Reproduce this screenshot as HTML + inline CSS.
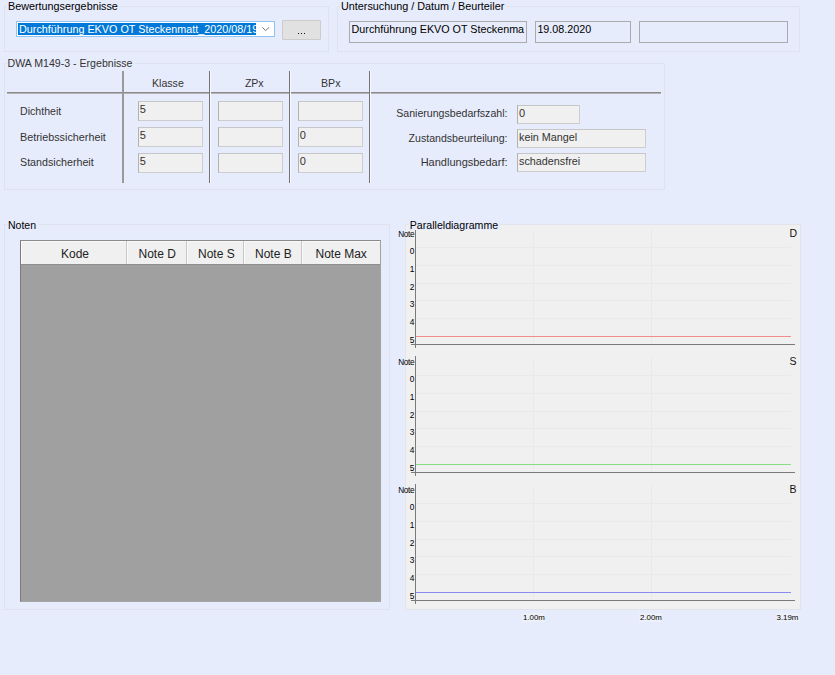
<!DOCTYPE html>
<html><head><meta charset="utf-8">
<style>
html,body{margin:0;padding:0;}
body{width:835px;height:675px;background:#E7ECFC;position:relative;overflow:hidden;font-family:"Liberation Sans",sans-serif;color:#000;}
.a{position:absolute;}
.t{position:absolute;white-space:nowrap;}
.grp{position:absolute;border:1px solid #DEE2EE;box-sizing:border-box;}
.tb{position:absolute;box-sizing:border-box;border:1px solid #ABABAB;overflow:hidden;}
.dis{position:absolute;box-sizing:border-box;border:1px solid;border-color:#C6C6C6 #CDCDCD #CDCDCD #B2B2B2;background:#F0F0F0;overflow:hidden;}
.ln{position:absolute;background:#8C8C8C;}
</style></head><body>

<div class="grp" style="left:4px;top:6px;width:325px;height:46px;"></div>
<div class="a" style="left:7px;top:1px;width:112px;height:10px;background:#E7ECFC;"></div>
<div class="t" style="left:8px;top:0.76px;font-size:10.8px;line-height:11px;color:#000;">Bewertungsergebnisse</div>
<div class="a" style="left:16px;top:21px;width:259px;height:16px;box-sizing:border-box;border:1px solid #8EC3F2;background:#fff;"></div>
<div class="a" style="left:18px;top:23px;width:238px;height:12px;background:#0078D7;overflow:hidden;">
<div class="t" style="left:1px;top:0.76px;font-size:10.8px;line-height:11px;color:#fff;">Durchführung EKVO OT Steckenmatt_2020/08/19</div>
</div>
<svg class="a" style="left:261px;top:26px" width="10" height="6"><polyline points="1.4,1.4 4.7,4.6 8,1.4" fill="none" stroke="#606060" stroke-width="0.85"/></svg>
<div class="a" style="left:282px;top:20px;width:39px;height:20px;box-sizing:border-box;border:1px solid #CCCCCC;background:#E1E1E1;border-radius:1px;"></div>
<div class="a" style="left:298px;top:33px;width:1px;height:1px;background:#111;"></div>
<div class="a" style="left:301px;top:33px;width:1px;height:1px;background:#111;"></div>
<div class="a" style="left:304px;top:33px;width:1px;height:1px;background:#111;"></div>
<div class="grp" style="left:337px;top:6px;width:463px;height:46px;"></div>
<div class="a" style="left:340px;top:1px;width:166px;height:10px;background:#E7ECFC;"></div>
<div class="t" style="left:341px;top:0.76px;font-size:10.8px;line-height:11px;color:#000;">Untersuchung / Datum / Beurteiler</div>
<div class="tb" style="left:349px;top:21px;width:178px;height:22px;"><div class="t" style="left:1.6px;top:1.78px;font-size:10.75px;line-height:11px;color:#000;">Durchführung EKVO OT Steckenma</div></div>
<div class="tb" style="left:535px;top:21px;width:96px;height:22px;"><div class="t" style="left:1.4px;top:1.78px;font-size:10.75px;line-height:11px;color:#000;">19.08.2020</div></div>
<div class="tb" style="left:639px;top:21px;width:149px;height:22px;"></div>
<div class="grp" style="left:4px;top:63px;width:661px;height:127px;"></div>
<div class="a" style="left:7px;top:57px;width:128px;height:10px;background:#E7ECFC;"></div>
<div class="t" style="left:7.5px;top:58.33px;font-size:10.6px;line-height:11px;color:#333;">DWA M149-3 - Ergebnisse</div>
<div class="a" style="left:7px;top:92px;width:654px;height:1px;background:#8A8A8A;"></div>
<div class="a" style="left:7px;top:93px;width:654px;height:1px;background:#B4B4B4;"></div>
<div class="a" style="left:122px;top:71px;width:2px;height:112px;background:#9A9A9A;"></div>
<div class="a" style="left:209px;top:71px;width:1px;height:112px;background:#757575;"></div>
<div class="a" style="left:210px;top:71px;width:1px;height:112px;background:#F6F8FF;"></div>
<div class="a" style="left:289px;top:71px;width:1px;height:112px;background:#757575;"></div>
<div class="a" style="left:290px;top:71px;width:1px;height:112px;background:#F6F8FF;"></div>
<div class="a" style="left:369px;top:71px;width:1px;height:112px;background:#757575;"></div>
<div class="a" style="left:370px;top:71px;width:1px;height:112px;background:#F6F8FF;"></div>
<div class="t" style="left:152px;top:77.83px;font-size:10.6px;line-height:11px;color:#333;">Klasse</div>
<div class="t" style="left:245px;top:77.83px;font-size:10.6px;line-height:11px;color:#333;letter-spacing:-0.1px;">ZPx</div>
<div class="t" style="left:321px;top:77.83px;font-size:10.6px;line-height:11px;color:#333;">BPx</div>
<div class="t" style="left:20px;top:106.33px;font-size:10.6px;line-height:11px;color:#333;">Dichtheit</div>
<div class="t" style="left:20px;top:132.06px;font-size:10.8px;line-height:11px;color:#333;">Betriebssicherheit</div>
<div class="t" style="left:20px;top:157.49px;font-size:10.7px;line-height:11px;color:#333;">Standsicherheit</div>
<div class="dis" style="left:138px;top:101px;width:65px;height:20px;"><div class="t" style="left:0.7px;top:2.49px;font-size:11px;line-height:11px;color:#333;">5</div></div>
<div class="dis" style="left:218px;top:101px;width:65px;height:20px;"></div>
<div class="dis" style="left:298px;top:101px;width:65px;height:20px;"></div>
<div class="dis" style="left:138px;top:127px;width:65px;height:20px;"><div class="t" style="left:0.7px;top:2.49px;font-size:11px;line-height:11px;color:#333;">5</div></div>
<div class="dis" style="left:218px;top:127px;width:65px;height:20px;"></div>
<div class="dis" style="left:298px;top:127px;width:65px;height:20px;"><div class="t" style="left:0.7px;top:2.49px;font-size:11px;line-height:11px;color:#333;">0</div></div>
<div class="dis" style="left:138px;top:153px;width:65px;height:20px;"><div class="t" style="left:0.7px;top:2.49px;font-size:11px;line-height:11px;color:#333;">5</div></div>
<div class="dis" style="left:218px;top:153px;width:65px;height:20px;"></div>
<div class="dis" style="left:298px;top:153px;width:65px;height:20px;"><div class="t" style="left:0.7px;top:2.49px;font-size:11px;line-height:11px;color:#333;">0</div></div>
<div class="t" style="right:327.5px;top:107.93px;font-size:10.6px;line-height:11px;color:#333;">Sanierungsbedarfszahl:</div>
<div class="t" style="right:327.5px;top:133.13px;font-size:10.6px;line-height:11px;color:#333;">Zustandsbeurteilung:</div>
<div class="t" style="right:327.5px;top:157.49px;font-size:11px;line-height:11px;color:#333;">Handlungsbedarf:</div>
<div class="dis" style="left:517px;top:105px;width:63px;height:19px;"><div class="t" style="left:1px;top:1.69px;font-size:11px;line-height:11px;color:#333;">0</div></div>
<div class="dis" style="left:517px;top:129px;width:129px;height:19px;"><div class="t" style="left:1px;top:1.76px;font-size:10.8px;line-height:11px;color:#333;">kein Mangel</div></div>
<div class="dis" style="left:517px;top:153px;width:129px;height:19px;"><div class="t" style="left:1px;top:1.76px;font-size:10.8px;line-height:11px;color:#333;">schadensfrei</div></div>
<div class="grp" style="left:4px;top:224px;width:386px;height:386px;"></div>
<div class="a" style="left:7px;top:219px;width:31px;height:10px;background:#E7ECFC;"></div>
<div class="t" style="left:8px;top:220.06px;font-size:10.5px;line-height:10px;color:#000;">Noten</div>
<div class="a" style="left:20px;top:240px;width:361px;height:362px;box-sizing:border-box;border:1px solid;border-color:#8A8A8A #A2A2A2 #A6A6A6 #7C7C7C;background:#A0A0A0;"></div>
<div class="a" style="left:21px;top:241px;width:359px;height:23px;box-sizing:border-box;background:#F0F0F0;border-top:1px solid #FAFAFA;border-left:1px solid #FAFAFA;"></div>
<div class="a" style="left:21px;top:264px;width:359px;height:1px;background:#8E8E8E;"></div>
<div class="a" style="left:126px;top:241px;width:1px;height:23px;background:#C8C8C8;"></div>
<div class="a" style="left:127px;top:241px;width:1px;height:23px;background:#FAFAFA;"></div>
<div class="a" style="left:186px;top:241px;width:1px;height:23px;background:#C8C8C8;"></div>
<div class="a" style="left:187px;top:241px;width:1px;height:23px;background:#FAFAFA;"></div>
<div class="a" style="left:243px;top:241px;width:1px;height:23px;background:#C8C8C8;"></div>
<div class="a" style="left:244px;top:241px;width:1px;height:23px;background:#FAFAFA;"></div>
<div class="a" style="left:301px;top:241px;width:1px;height:23px;background:#C8C8C8;"></div>
<div class="a" style="left:302px;top:241px;width:1px;height:23px;background:#FAFAFA;"></div>
<div class="t" style="left:61px;top:248.14px;font-size:12px;line-height:12px;color:#222;">Kode</div>
<div class="t" style="left:138.5px;top:248.14px;font-size:12px;line-height:12px;color:#222;">Note D</div>
<div class="t" style="left:198px;top:248.14px;font-size:12px;line-height:12px;color:#222;">Note S</div>
<div class="t" style="left:255px;top:248.14px;font-size:12px;line-height:12px;color:#222;">Note B</div>
<div class="t" style="left:315.5px;top:248.14px;font-size:12px;line-height:12px;color:#222;">Note Max</div>
<div class="a" style="left:405px;top:224px;width:396px;height:386px;background:#F0F0F0;box-sizing:border-box;border:1px solid #E2E4EC;"></div>
<svg class="a" style="left:0;top:0" width="835" height="675" shape-rendering="crispEdges">
<rect x="416" y="247" width="375" height="1" fill="#E9E9E9"/>
<rect x="416" y="265" width="375" height="1" fill="#E9E9E9"/>
<rect x="416" y="283" width="375" height="1" fill="#E9E9E9"/>
<rect x="416" y="300" width="375" height="1" fill="#E9E9E9"/>
<rect x="416" y="318" width="375" height="1" fill="#E9E9E9"/>
<rect x="533" y="230" width="1" height="114" fill="#E9E9E9"/>
<rect x="651" y="230" width="1" height="114" fill="#E9E9E9"/>
<rect x="416" y="336" width="375" height="1" fill="#F48B8B"/>
<rect x="415" y="228" width="1" height="120" fill="#7A7A7A"/>
<rect x="411" y="344" width="384" height="1" fill="#7A7A7A"/>
<rect x="416" y="375" width="375" height="1" fill="#E9E9E9"/>
<rect x="416" y="393" width="375" height="1" fill="#E9E9E9"/>
<rect x="416" y="411" width="375" height="1" fill="#E9E9E9"/>
<rect x="416" y="428" width="375" height="1" fill="#E9E9E9"/>
<rect x="416" y="446" width="375" height="1" fill="#E9E9E9"/>
<rect x="533" y="358" width="1" height="114" fill="#E9E9E9"/>
<rect x="651" y="358" width="1" height="114" fill="#E9E9E9"/>
<rect x="416" y="464" width="375" height="1" fill="#88DD88"/>
<rect x="415" y="356" width="1" height="120" fill="#7A7A7A"/>
<rect x="411" y="472" width="384" height="1" fill="#7A7A7A"/>
<rect x="416" y="503" width="375" height="1" fill="#E9E9E9"/>
<rect x="416" y="521" width="375" height="1" fill="#E9E9E9"/>
<rect x="416" y="539" width="375" height="1" fill="#E9E9E9"/>
<rect x="416" y="556" width="375" height="1" fill="#E9E9E9"/>
<rect x="416" y="574" width="375" height="1" fill="#E9E9E9"/>
<rect x="533" y="486" width="1" height="114" fill="#E9E9E9"/>
<rect x="651" y="486" width="1" height="114" fill="#E9E9E9"/>
<rect x="416" y="592" width="375" height="1" fill="#8A8AF2"/>
<rect x="415" y="484" width="1" height="120" fill="#7A7A7A"/>
<rect x="411" y="600" width="384" height="1" fill="#7A7A7A"/>
</svg>
<div class="t" style="right:420.8px;top:230.96px;font-size:8.2px;line-height:8px;color:#000;letter-spacing:-0.35px;">Note</div>
<div class="t" style="right:420.5px;top:247.29px;font-size:8.4px;line-height:8px;color:#000;">0</div>
<div class="t" style="right:420.5px;top:265.29px;font-size:8.4px;line-height:8px;color:#000;">1</div>
<div class="t" style="right:420.5px;top:283.29px;font-size:8.4px;line-height:8px;color:#000;">2</div>
<div class="t" style="right:420.5px;top:300.29px;font-size:8.4px;line-height:8px;color:#000;">3</div>
<div class="t" style="right:420.5px;top:318.29px;font-size:8.4px;line-height:8px;color:#000;">4</div>
<div class="t" style="right:420.5px;top:336.29px;font-size:8.4px;line-height:8px;color:#000;">5</div>
<div class="t" style="left:789.5px;top:228.36px;font-size:10.5px;line-height:10px;color:#111;">D</div>
<div class="t" style="right:420.8px;top:358.96px;font-size:8.2px;line-height:8px;color:#000;letter-spacing:-0.35px;">Note</div>
<div class="t" style="right:420.5px;top:375.29px;font-size:8.4px;line-height:8px;color:#000;">0</div>
<div class="t" style="right:420.5px;top:393.29px;font-size:8.4px;line-height:8px;color:#000;">1</div>
<div class="t" style="right:420.5px;top:411.29px;font-size:8.4px;line-height:8px;color:#000;">2</div>
<div class="t" style="right:420.5px;top:428.29px;font-size:8.4px;line-height:8px;color:#000;">3</div>
<div class="t" style="right:420.5px;top:446.29px;font-size:8.4px;line-height:8px;color:#000;">4</div>
<div class="t" style="right:420.5px;top:464.29px;font-size:8.4px;line-height:8px;color:#000;">5</div>
<div class="t" style="left:789.5px;top:356.36px;font-size:10.5px;line-height:10px;color:#111;">S</div>
<div class="t" style="right:420.8px;top:486.96px;font-size:8.2px;line-height:8px;color:#000;letter-spacing:-0.35px;">Note</div>
<div class="t" style="right:420.5px;top:503.29px;font-size:8.4px;line-height:8px;color:#000;">0</div>
<div class="t" style="right:420.5px;top:521.29px;font-size:8.4px;line-height:8px;color:#000;">1</div>
<div class="t" style="right:420.5px;top:539.29px;font-size:8.4px;line-height:8px;color:#000;">2</div>
<div class="t" style="right:420.5px;top:556.29px;font-size:8.4px;line-height:8px;color:#000;">3</div>
<div class="t" style="right:420.5px;top:574.29px;font-size:8.4px;line-height:8px;color:#000;">4</div>
<div class="t" style="right:420.5px;top:592.29px;font-size:8.4px;line-height:8px;color:#000;">5</div>
<div class="t" style="left:789.5px;top:484.36px;font-size:10.5px;line-height:10px;color:#111;">B</div>
<div class="a" style="left:522px;top:613px;width:23px;height:9px;background:#EDF0F8;"></div>
<div class="t" style="left:523px;top:614.16px;font-size:7.9px;line-height:8px;color:#000;">1.00m</div>
<div class="a" style="left:639px;top:613px;width:23px;height:9px;background:#EDF0F8;"></div>
<div class="t" style="left:640px;top:614.16px;font-size:7.9px;line-height:8px;color:#000;">2.00m</div>
<div class="a" style="left:775.5px;top:613px;width:23px;height:9px;background:#EDF0F8;"></div>
<div class="t" style="left:776.5px;top:614.16px;font-size:7.9px;line-height:8px;color:#000;">3.19m</div>
<div class="a" style="left:408px;top:219px;width:92px;height:11px;background:#E7ECFC;"></div>
<div class="t" style="left:409.8px;top:219.83px;font-size:10.6px;line-height:11px;color:#000;">Paralleldiagramme</div>
</body></html>
